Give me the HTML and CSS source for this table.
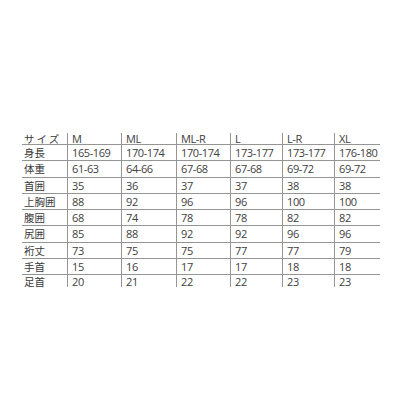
FILE: index.html
```html
<!DOCTYPE html>
<html lang="ja">
<head>
<meta charset="utf-8">
<link rel="stylesheet" href="styles.css">
</head>
<body>
<div class="page">
  <div class="chart">
    <div class="c lab head kata">サイズ</div><div class="c head">M</div><div class="c head">ML</div><div class="c head">ML-R</div><div class="c head">L</div><div class="c head">L-R</div><div class="c head">XL</div>
    <div class="c lab">身長</div><div class="c">165-169</div><div class="c">170-174</div><div class="c">170-174</div><div class="c">173-177</div><div class="c">173-177</div><div class="c">176-180</div>
    <div class="c lab">体重</div><div class="c">61-63</div><div class="c">64-66</div><div class="c">67-68</div><div class="c">67-68</div><div class="c">69-72</div><div class="c">69-72</div>
    <div class="c lab">首囲</div><div class="c">35</div><div class="c">36</div><div class="c">37</div><div class="c">37</div><div class="c">38</div><div class="c">38</div>
    <div class="c lab">上胸囲</div><div class="c">88</div><div class="c">92</div><div class="c">96</div><div class="c">96</div><div class="c">100</div><div class="c">100</div>
    <div class="c lab">腹囲</div><div class="c">68</div><div class="c">74</div><div class="c">78</div><div class="c">78</div><div class="c">82</div><div class="c">82</div>
    <div class="c lab">尻囲</div><div class="c">85</div><div class="c">88</div><div class="c">92</div><div class="c">92</div><div class="c">96</div><div class="c">96</div>
    <div class="c lab">裄丈</div><div class="c">73</div><div class="c">75</div><div class="c">75</div><div class="c">77</div><div class="c">77</div><div class="c">79</div>
    <div class="c lab">手首</div><div class="c">15</div><div class="c">16</div><div class="c">17</div><div class="c">17</div><div class="c">18</div><div class="c">18</div>
    <div class="c lab last">足首</div><div class="c last">20</div><div class="c last">21</div><div class="c last">22</div><div class="c last">22</div><div class="c last">23</div><div class="c last">23</div>
  </div>
</div>
</body>
</html>
```
FILE: styles.css
```css
html, body {
  margin: 0;
  padding: 0;
  background: #ffffff;
}
.page {
  width: 400px;
  height: 400px;
  padding: 133px 0 0 22px;
  box-sizing: border-box;
}
.chart {
  display: grid;
  width: 358px;
  grid-template-columns: 45px 54px 55px 54px 52px 52px 46px;
  grid-template-rows: 12px repeat(8, 16.25px) 12px;
  font-family: "Open Sans", "Noto Sans CJK JP", sans-serif;
  font-size: 11px;
  letter-spacing: -0.4px;
  color: #404040;
}
.c {
  box-sizing: border-box;
  border-bottom: 1px solid #959595;
  border-left: 1px solid #959595;
  padding-left: 4px;
  line-height: 15.25px;
  white-space: nowrap;
  overflow: visible;
}
.lab {
  border-left: none;
  padding-left: 2px;
  font-family: "Noto Sans CJK JP", sans-serif;
  font-size: 10.5px;
  letter-spacing: 0;
  color: #3a3a3a;
}
.kata {
  letter-spacing: 2px;
}
.head {
  line-height: 11px;
}
.last {
  border-bottom: none;
  line-height: 11px;
  padding-top: 1px;
}
```
